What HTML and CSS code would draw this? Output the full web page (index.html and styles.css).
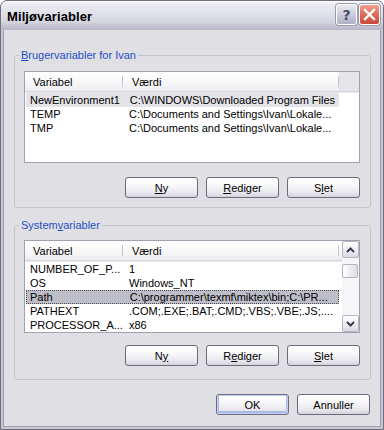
FILE: index.html
```html
<!DOCTYPE html>
<html lang="da">
<head>
<meta charset="utf-8">
<title>Miljøvariabler</title>
<link rel="stylesheet" href="styles.css">
</head>
<body>
<div class="window">
  <div class="titlebar">
    <span class="title">Miljøvariabler</span>
    <span class="capbtn help">?</span>
    <span class="capbtn close">
      <svg width="13" height="13" viewBox="0 0 13 13"><path d="M2 2 L11 11 M11 2 L2 11" stroke="#fff" stroke-width="2.4" stroke-linecap="square"/></svg>
    </span>
  </div>
  <div class="frame">
    <div class="client">
      <fieldset class="group">
        <legend><u>B</u>rugervariabler for Ivan</legend>
        <div class="list">
          <div class="lv-main">
            <div class="lv-head">
              <div class="hc c1">Variabel</div>
              <div class="hc c2">Værdi</div>
              <div class="hc c3"></div>
            </div>
            <div class="row sel-inactive"><span class="cell c1">NewEnvironment1</span><span class="cell c2">C:\WINDOWS\Downloaded Program Files</span></div>
            <div class="row"><span class="cell c1">TEMP</span><span class="cell c2">C:\Documents and Settings\Ivan\Lokale...</span></div>
            <div class="row"><span class="cell c1">TMP</span><span class="cell c2">C:\Documents and Settings\Ivan\Lokale...</span></div>
          </div>
        </div>
        <div class="btnrow">
          <button class="btn"><u>N</u>y</button>
          <button class="btn"><u>R</u>ediger</button>
          <button class="btn">S<u>l</u>et</button>
        </div>
      </fieldset>
      <fieldset class="group group2">
        <legend>System<u>v</u>ariabler</legend>
        <div class="list list2">
          <div class="lv-main">
            <div class="lv-head">
              <div class="hc c1">Variabel</div>
              <div class="hc c2">Værdi</div>
              <div class="hc c3"></div>
            </div>
            <div class="row"><span class="cell c1">NUMBER_OF_P...</span><span class="cell c2">1</span></div>
            <div class="row"><span class="cell c1">OS</span><span class="cell c2">Windows_NT</span></div>
            <div class="row sel"><span class="cell c1">Path</span><span class="cell c2">C:\programmer\texmf\miktex\bin;C:\PR...</span></div>
            <div class="row"><span class="cell c1">PATHEXT</span><span class="cell c2">.COM;.EXE;.BAT;.CMD;.VBS;.VBE;.JS;....</span></div>
            <div class="row"><span class="cell c1">PROCESSOR_A...</span><span class="cell c2">x86</span></div>
          </div>
          <div class="vscroll">
            <div class="sbtn">
              <svg width="9" height="6" viewBox="0 0 9 6"><path d="M1 5 L4.5 1.5 L8 5" fill="none" stroke="#3c3c4c" stroke-width="2"/></svg>
            </div>
            <div class="track">
              <div class="thumb"></div>
            </div>
            <div class="sbtn">
              <svg width="9" height="6" viewBox="0 0 9 6"><path d="M1 1 L4.5 4.5 L8 1" fill="none" stroke="#3c3c4c" stroke-width="2"/></svg>
            </div>
          </div>
        </div>
        <div class="btnrow">
          <button class="btn">N<u>y</u></button>
          <button class="btn">R<u>e</u>diger</button>
          <button class="btn"><u>S</u>let</button>
        </div>
      </fieldset>
      <div class="dlgbtns">
        <button class="btn default">OK</button>
        <button class="btn">Annuller</button>
      </div>
    </div>
  </div>
</div>
</body>
</html>
```

FILE: styles.css
```css
* { box-sizing: border-box; }

body {
  margin: 0;
  font-family: "Liberation Sans", Arial, sans-serif;
  font-size: 11px;
  color: #000;
  background: #fff;
}

.window {
  width: 384px;
  height: 430px;
  border: 1px solid #6f6f80;
  border-radius: 7px 7px 0 0;
  background: #c6c6d2;
  display: flex;
  flex-direction: column;
  overflow: hidden;
}

.titlebar {
  height: 28px;
  flex: none;
  display: flex;
  align-items: center;
  gap: 2px;
  padding: 0 3px 1px 6px;
  background: linear-gradient(#fdfdfe 0%, #ebebf1 12%, #e0e0e8 45%, #d4d4de 75%, #b8b8c8 100%);
}

.title {
  flex: 1;
  font-weight: bold;
  font-size: 13px;
  letter-spacing: 0.1px;
  color: #000;
  padding-top: 3px;
}

.capbtn {
  width: 21px;
  height: 21px;
  border: 1px solid #fff;
  border-radius: 3px;
  display: flex;
  align-items: center;
  justify-content: center;
  box-shadow: 0 0 0 1px #9c9cb0;
}

.help {
  background: linear-gradient(#e8e9f2, #c8cadc 55%, #aeb0c8);
  color: #4a4c66;
  font-weight: bold;
  font-size: 14px;
  font-family: "DejaVu Sans", sans-serif;
}

.close {
  background: linear-gradient(#f4a090, #e06a58 50%, #c84838);
}

.frame {
  flex: 1;
  display: flex;
  padding: 0 2px 2px;
}

.client {
  flex: 1;
  display: flex;
  flex-direction: column;
  background: #e0dfe3;
  border: 1px solid #a0a0b0;
  border-top-color: #b8b8c6;
}

.group {
  margin: 19px 9px 0 10px;
  padding: 9px 10px 9px 9px;
  border: 1px solid #c4c4cc;
  border-radius: 3px;
  min-width: 0;
}

.group2 {
  margin-top: 11px;
  padding: 8px 10px 13px 9px;
}

legend {
  margin-left: -5px;
  padding: 0 2px;
  line-height: 13px;
  color: #1d4fc4;
}

.list {
  height: 92px;
  border: 1px solid #a0a0ae;
  background: #fff;
  display: flex;
}

.list2 {
  height: 93px;
}

.lv-main {
  flex: 1;
  min-width: 0;
}

.lv-head {
  display: flex;
  height: 20px;
  background: linear-gradient(#ffffff, #f5f5f7 70%, #ebebef);
  border-bottom: 1px solid #d6d6de;
  box-shadow: 0 1px 0 #eaeaee;
}

.hc {
  line-height: 20px;
  white-space: nowrap;
  position: relative;
}

.hc.c1 { width: 98px; padding-left: 8px; }
.hc.c2 { width: 216px; padding-left: 9px; }
.hc.c3 { flex: 1; background: #e4e4ea; }

.hc.c1::after,
.hc.c2::after {
  content: "";
  position: absolute;
  right: 0;
  top: 4px;
  bottom: 4px;
  width: 1px;
  background: #c6c6ce;
}

.list2 .hc.c3 { background: transparent; }

.row {
  display: flex;
  width: 314px;
  height: 14px;
  line-height: 14px;
  white-space: nowrap;
}

.lv-head + .row { margin-top: 1px; }

.cell { overflow: hidden; }
.cell.c1 { width: 98px; padding-left: 5px; }
.cell.c2 { width: 216px; padding-left: 6px; }

.sel-inactive { background: #e3e3e8; margin-left: 1px; width: 313px; }
.sel-inactive .c1 { padding-left: 4px; }

.sel {
  background: #bebec8;
  outline: 1px dotted #4a4a55;
  outline-offset: -1px;
  margin-left: 1px;
  width: 313px;
}
.sel .c1 { padding-left: 4px; }

.vscroll {
  width: 17px;
  flex: none;
  display: flex;
  flex-direction: column;
  background: #f6f6f8;
}

.sbtn {
  height: 17px;
  flex: none;
  border: 1px solid #b4b4c2;
  border-radius: 2px;
  background: linear-gradient(#ffffff, #ececf1 60%, #d9d9e2);
  display: flex;
  align-items: center;
  justify-content: center;
}

.track {
  flex: 1;
  padding-top: 6px;
}

.thumb {
  height: 14px;
  margin: 0 1px 0 0;
  border: 1px solid #b4b4c2;
  border-radius: 2px;
  background: linear-gradient(90deg, #ffffff, #ebebf0 60%, #dcdce4);
}

.btnrow {
  display: flex;
  justify-content: flex-end;
  gap: 8px;
  margin-top: 14px;
}

.group2 .btnrow { margin-top: 12px; }

.btn {
  width: 73px;
  height: 21px;
  padding: 0;
  font-family: "Liberation Sans", Arial, sans-serif;
  font-size: 11px;
  color: #000;
  border: 1px solid #6c6c7e;
  border-radius: 3px;
  background: linear-gradient(#ffffff, #f6f6f8 45%, #e6e6ec 80%, #d2d2dc);
}

.btn.default {
  box-shadow: inset 0 0 0 1px #c4d0f2, inset 0 -1px 0 2px #aabbe8;
}

.dlgbtns {
  display: flex;
  justify-content: flex-end;
  gap: 8px;
  margin: 14px 10px 0 0;
}
```
